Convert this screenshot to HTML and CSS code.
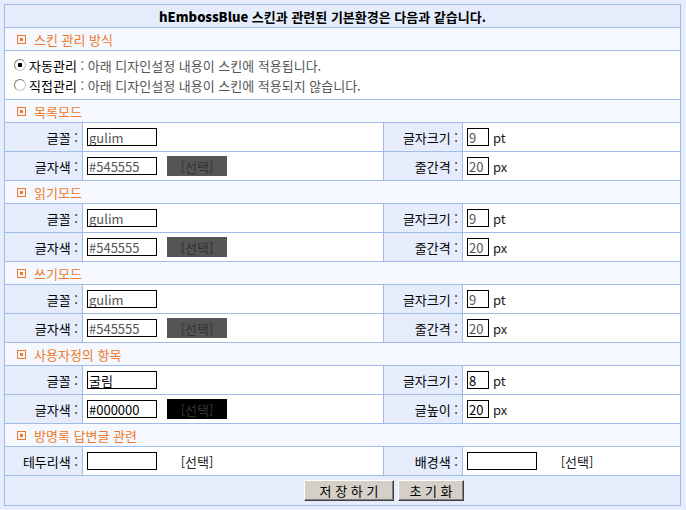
FILE: index.html
```html
<!DOCTYPE html>
<html lang="ko">
<head>
  <meta charset="UTF-8" />
  <title>hEmbossBlue 스킨 환경설정</title>
  <link rel="stylesheet" href="styles.css">
</head>
<body>
  <!-- 스킨 환경설정 -->
  <form class="skin">
    <div class="title"><b>hEmbossBlue</b>&nbsp;스킨과 관련된 기본환경은 다음과 같습니다.</div>

    <div class="sec"><i class="mark"></i>스킨 관리 방식</div>
    <div class="radios">
      <label><input type="radio" name="mode" checked>자동관리 <span class="desc">: 아래 디자인설정 내용이 스킨에 적용됩니다.</span></label>
      <label><input type="radio" name="mode">직접관리 <span class="desc">: 아래 디자인설정 내용이 스킨에 적용되지 않습니다.</span></label>
    </div>

    <!-- 목록모드 -->
    <div class="sec"><i class="mark"></i>목록모드</div>
    <div class="lbl">글꼴 :</div>
    <div class="val"><input class="txt" value="gulim"></div>
    <div class="lbl">글자크기 :</div>
    <div class="val"><input class="txt num" value="9"><span class="unit">pt</span></div>
    <div class="lbl">글자색 :</div>
    <div class="val"><input class="txt" value="#545555"><span class="pick gray">[선택]</span></div>
    <div class="lbl">줄간격 :</div>
    <div class="val"><input class="txt num" value="20"><span class="unit">px</span></div>

    <!-- 읽기모드 -->
    <div class="sec"><i class="mark"></i>읽기모드</div>
    <div class="lbl">글꼴 :</div>
    <div class="val"><input class="txt" value="gulim"></div>
    <div class="lbl">글자크기 :</div>
    <div class="val"><input class="txt num" value="9"><span class="unit">pt</span></div>
    <div class="lbl">글자색 :</div>
    <div class="val"><input class="txt" value="#545555"><span class="pick gray">[선택]</span></div>
    <div class="lbl">줄간격 :</div>
    <div class="val"><input class="txt num" value="20"><span class="unit">px</span></div>

    <!-- 쓰기모드 -->
    <div class="sec"><i class="mark"></i>쓰기모드</div>
    <div class="lbl">글꼴 :</div>
    <div class="val"><input class="txt" value="gulim"></div>
    <div class="lbl">글자크기 :</div>
    <div class="val"><input class="txt num" value="9"><span class="unit">pt</span></div>
    <div class="lbl">글자색 :</div>
    <div class="val"><input class="txt" value="#545555"><span class="pick gray">[선택]</span></div>
    <div class="lbl">줄간격 :</div>
    <div class="val"><input class="txt num" value="20"><span class="unit">px</span></div>

    <!-- 사용자정의 -->
    <div class="sec"><i class="mark"></i>사용자정의 항목</div>
    <div class="lbl">글꼴 :</div>
    <div class="val"><input class="txt dark" value="굴림"></div>
    <div class="lbl">글자크기 :</div>
    <div class="val"><input class="txt num dark" value="8"><span class="unit">pt</span></div>
    <div class="lbl">글자색 :</div>
    <div class="val"><input class="txt dark" value="#000000"><span class="pick black">[선택]</span></div>
    <div class="lbl">글높이 :</div>
    <div class="val"><input class="txt num dark" value="20"><span class="unit">px</span></div>

    <!-- 방명록 -->
    <div class="sec"><i class="mark"></i>방명록 답변글 관련</div>
    <div class="lbl">테두리색 :</div>
    <div class="val"><input class="txt dark" value=""><span class="pick">[선택]</span></div>
    <div class="lbl">배경색 :</div>
    <div class="val"><input class="txt dark" value=""><span class="pick">[선택]</span></div>

    <div class="btns">
      <button type="button" class="save">저 장 하 기</button>
      <button type="button" class="reset">초 기 화</button>
    </div>
  </form>
</body>
</html>
```

FILE: styles.css
```css
:root {
  --line: #a0bbe8;
  --pale: #e5edfc;
  --head: #f5f8fe;
  --orange: #f07828;
}
body {
  margin: 4px;
  background: var(--pale);
  font-family: "Noto Sans CJK KR", "Liberation Sans", sans-serif;
  font-size: 13px;
  color: #000;
}
.skin {
  display: grid;
  grid-template-columns: 77px 300px 78px 217px;
  gap: 1px;
  padding: 1px;
  width: 677px;
  box-sizing: border-box;
  background: var(--line);
  margin: 0;
}
.title {
  grid-column: 1 / -1;
  height: 22px;
  display: flex;
  align-items: center;
  justify-content: center;
  padding-right: 40px;
  background: var(--pale);
  font-weight: bold;
}
.sec {
  grid-column: 1 / -1;
  height: 22px;
  display: flex;
  align-items: center;
  padding-left: 12px;
  background: var(--head);
  color: var(--orange);
}
.mark {
  width: 9px;
  height: 9px;
  box-sizing: border-box;
  border: 1px solid currentColor;
  margin-right: 8px;
  display: flex;
  align-items: center;
  justify-content: center;
}
.mark:after {
  content: "";
  width: 3px;
  height: 3px;
  background: currentColor;
}
.radios {
  grid-column: 1 / -1;
  height: 48px;
  box-sizing: border-box;
  padding: 4px 0 0 9px;
  background: #fff;
}
.radios label {
  display: flex;
  align-items: center;
  height: 20px;
  white-space: pre;
}
.radios input {
  appearance: none;
  width: 12px;
  height: 12px;
  margin: 0 3px 0 0;
  border: 1px solid #8a8a8a;
  border-color: #7a7a7a #c8c8c8 #c8c8c8 #7a7a7a;
  border-radius: 50%;
  background: #fff;
}
.radios input:checked {
  background: radial-gradient(circle, #000 2px, #fff 2.6px);
}
.desc {
  color: #555;
}
.lbl {
  height: 28px;
  display: flex;
  align-items: center;
  justify-content: flex-end;
  padding-right: 4px;
  background: var(--pale);
}
.val {
  height: 28px;
  display: flex;
  align-items: center;
  padding-left: 4px;
  background: #fff;
}
.txt {
  width: 70px;
  height: 18px;
  box-sizing: border-box;
  border: 1px solid #000;
  padding: 0 1px;
  margin: 0;
  font: inherit;
  line-height: 16px;
  color: #545555;
  background: #fff;
}
.txt.num {
  width: 22px;
}
.txt.dark {
  color: #000;
}
.unit {
  margin-left: 4px;
  color: #222;
}
.pick {
  width: 60px;
  height: 20px;
  margin-left: 10px;
  display: flex;
  align-items: center;
  justify-content: center;
  color: #222;
}
.pick.gray {
  background: #545555;
  color: #333;
}
.pick.black {
  background: #000;
  color: #333;
}
.btns {
  grid-column: 1 / -1;
  height: 29px;
  display: flex;
  align-items: center;
  justify-content: center;
  gap: 4px;
  padding-left: 83px;
  background: var(--pale);
}
.btns button {
  height: 21px;
  padding: 0;
  font: inherit;
  color: #000;
  background: #d4d0c8;
  border: 1px solid;
  border-color: #fff #404040 #404040 #fff;
  box-shadow: inset -1px -1px #808080;
  white-space: pre;
}
.save {
  width: 90px;
}
.reset {
  width: 66px;
}
```
